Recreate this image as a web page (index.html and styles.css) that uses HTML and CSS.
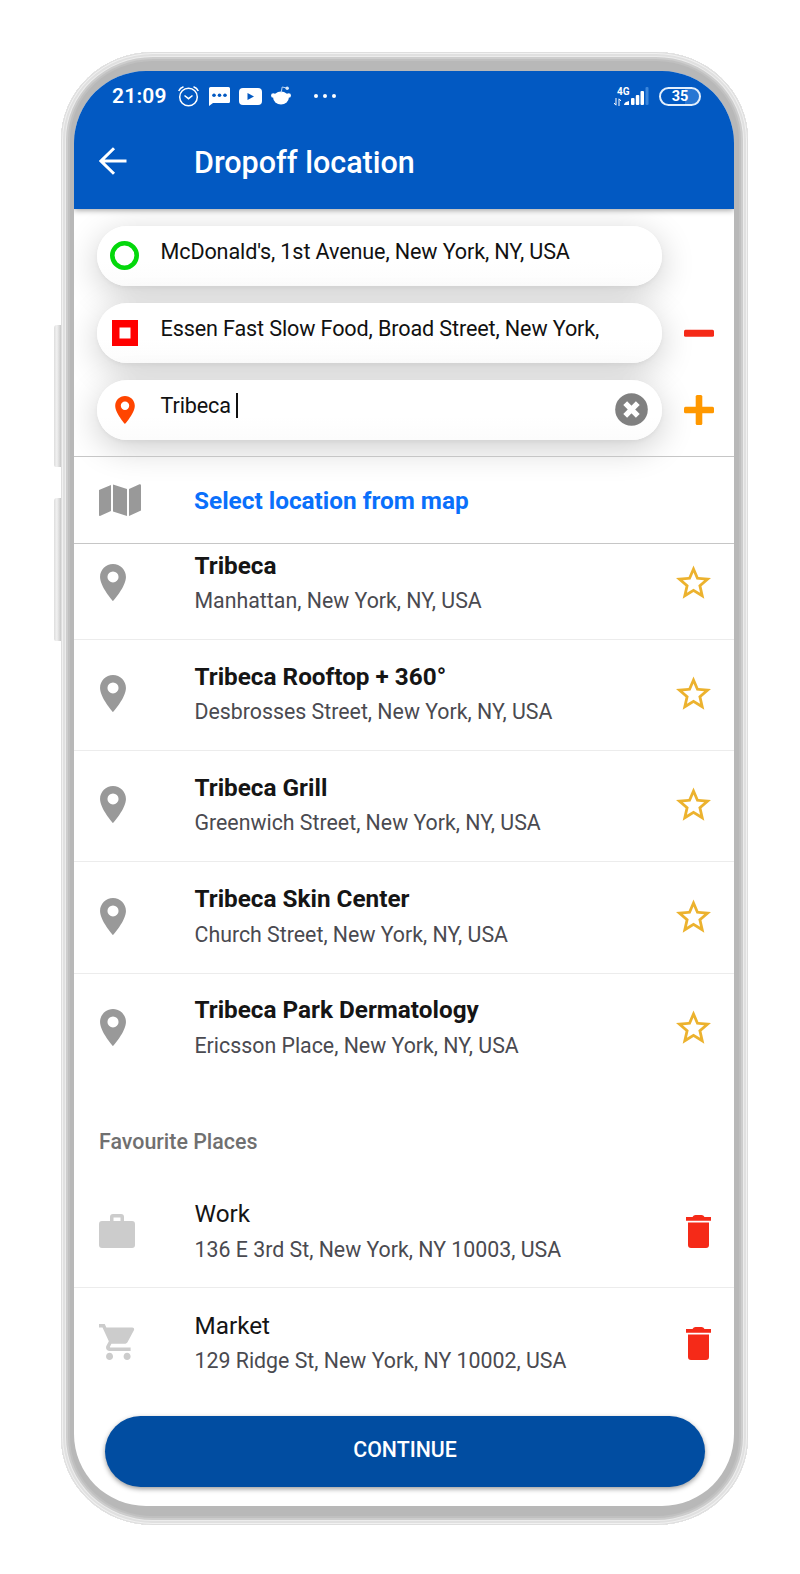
FILE: index.html
```html
<!DOCTYPE html>
<html lang="en">
<head>
<meta charset="utf-8">
<title>Dropoff location</title>
<link rel="stylesheet" href="styles.css">
</head>
<body>
<svg width="0" height="0" class="defs">
  <symbol id="pin" viewBox="5 2 14 20"><path d="M12 2C8.13 2 5 5.13 5 9c0 5.25 7 13 7 13s7-7.75 7-13c0-3.87-3.13-7-7-7zm0 10a3 3 0 1 1 0-6 3 3 0 0 1 0 6z"/></symbol>
  <symbol id="star" viewBox="2 2 20 19"><path d="M22 9.24l-7.19-.62L12 2 9.19 8.63 2 9.24l5.46 4.73L5.82 21 12 17.27 18.18 21l-1.63-7.03L22 9.24zM12 15.4l-3.76 2.27 1-4.28-3.32-2.88 4.38-.38L12 6.1l1.71 4.04 4.38.38-3.32 2.88 1 4.28L12 15.4z"/></symbol>
  <symbol id="trash" viewBox="0 0 25 33"><path d="M0 2h6.500q1-2 3-2h6q2 0 3 2H25v3.800H0zM2 7.500h21V30q0 3-3 3H5q-3 0-3-3z"/></symbol>
</svg>
<div class="stage">
  <div class="side-button upper"></div>
  <div class="side-button lower"></div>
  <div class="phone">
    <div class="screen">
      <header class="top">
        <div class="status">
          <span class="clock">21:09</span>
          <svg class="s-alarm" width="21" height="21" viewBox="0 0 21 21" fill="none" stroke="#fff" stroke-width="1.500"><circle cx="10.500" cy="11" r="8.800"/><path d="M6.500 9.500l4 3.200 4-3.200M.7 5Q2 2 5.500.8M20.300 5Q19 2 15.500.8"/></svg>
          <svg class="s-chat" width="21" height="19" viewBox="0 0 21 19"><path fill="#fff" d="M1.500 0h18Q21 0 21 1.500v13q0 1.500-1.500 1.500H4l-4 3V1.500Q0 0 1.500 0z"/><g fill="#0259c2"><circle cx="5" cy="8.200" r="1.800"/><circle cx="10.500" cy="8.200" r="1.800"/><circle cx="16" cy="8.200" r="1.800"/></g></svg>
          <svg class="s-tube" width="23" height="17" viewBox="0 0 23 17"><rect width="23" height="17" rx="4" fill="#fff"/><path fill="#0259c2" d="M8.500 5l6.500 3.500L8.500 12z"/></svg>
          <svg class="s-reddit" width="20" height="19" viewBox="0 0 20 19"><ellipse cx="10" cy="12" rx="7.800" ry="6.500" fill="#fff"/><circle cx="2.300" cy="9.500" r="2.300" fill="#fff"/><circle cx="17.700" cy="9.500" r="2.300" fill="#fff"/><path d="M10.200 6.500L11.200 1l4.500 1" fill="none" stroke="#b9d3f2" stroke-width="1"/><circle cx="16.200" cy="2.200" r="1.700" fill="#d9e8f8"/></svg>
          <svg class="s-dots" width="22" height="4" viewBox="0 0 22 4" fill="#fff"><circle cx="2" cy="2" r="2"/><circle cx="11" cy="2" r="2"/><circle cx="20" cy="2" r="2"/></svg>
          <span class="net"><span class="g4">4G</span>
            <svg width="7" height="8" viewBox="0 0 7 8" fill="none" stroke="#fff"><path d="M2 0v7M2 7.300L0 5M5 8V1M5 .7L7 3"/></svg></span>
          <svg class="s-signal" width="25" height="18" viewBox="0 0 25 18" fill="#fff"><path d="M0 18q0-3 5-4v4z"/><rect x="7" y="11" width="3.500" height="7" rx="1"/><rect x="11.800" y="8" width="3.500" height="10" rx="1"/><rect x="16.500" y="4" width="3.500" height="14" rx="1"/><rect x="21.500" y="0" width="3" height="18" rx="1" fill="#3a86dc"/></svg>
          <span class="battery">35</span>
        </div>
        <div class="bar">
          <svg class="back" width="28" height="28" viewBox="0 0 28 28" fill="none" stroke="#fff" stroke-width="3"><path d="M27.500 14H2M15 1.300L2 14l13 12.700"/></svg>
          <h1>Dropoff location</h1>
        </div>
      </header>
      <section class="stops">
        <div class="stop">
          <div class="field">
            <span class="mark"><svg width="29" height="29" viewBox="0 0 29 29"><circle cx="14.500" cy="14.500" r="12.200" fill="none" stroke="#04d80c" stroke-width="4.600"/></svg></span>
            <span class="value">McDonald's, 1st Avenue, New York, NY, USA</span>
          </div>
        </div>
        <div class="stop">
          <div class="field">
            <span class="mark"><svg width="26" height="26" viewBox="0 0 26 26"><path fill="#f00" fill-rule="evenodd" d="M0 0h26v26H0zM7.500 7.500v11h11v-11z"/></svg></span>
            <span class="value">Essen Fast Slow Food, Broad Street, New York,</span>
          </div>
          <svg class="action" width="30" height="30" viewBox="0 0 30 30"><rect y="11.700" width="30" height="7" rx="1.500" fill="#f52a18"/></svg>
        </div>
        <div class="stop">
          <div class="field">
            <span class="mark"><svg width="20" height="28" fill="#ff4500"><use href="#pin"/></svg></span>
            <span class="value">Tribeca<i class="caret"></i></span>
            <svg class="clear" width="33" height="33" viewBox="0 0 33 33"><circle cx="16.500" cy="16.500" r="16.300" fill="#808080"/><path d="M10.200 10.200l12.600 12.600M22.800 10.200L10.200 22.800" stroke="#fff" stroke-width="5.400"/></svg>
          </div>
          <svg class="action" width="30" height="30" viewBox="0 0 30 30" fill="#ff9800"><rect y="11.700" width="30" height="6.600" rx="1.500"/><rect x="11.700" width="6.600" height="30" rx="1.500"/></svg>
        </div>
      </section>
      <div class="map-link">
        <svg width="42" height="33" viewBox="0 0 42 33" fill="#999"><path d="M0 6L12 1v26L1.500 31.800Q0 32.500 0 31zM14 .5L28 5v27L14 27.500zM30 5L40.500.3Q42 0 42 1.500v25L30 32z"/></svg>
        <a>Select location from map</a>
      </div>
      <ul class="list results">
        <li><svg class="pin"><use href="#pin"/></svg><div><b>Tribeca</b><p>Manhattan, New York, NY, USA</p></div><svg class="star"><use href="#star"/></svg></li>
        <li><svg class="pin"><use href="#pin"/></svg><div><b>Tribeca Rooftop + 360°</b><p>Desbrosses Street, New York, NY, USA</p></div><svg class="star"><use href="#star"/></svg></li>
        <li><svg class="pin"><use href="#pin"/></svg><div><b>Tribeca Grill</b><p>Greenwich Street, New York, NY, USA</p></div><svg class="star"><use href="#star"/></svg></li>
        <li><svg class="pin"><use href="#pin"/></svg><div><b>Tribeca Skin Center</b><p>Church Street, New York, NY, USA</p></div><svg class="star"><use href="#star"/></svg></li>
        <li><svg class="pin"><use href="#pin"/></svg><div><b>Tribeca Park Dermatology</b><p>Ericsson Place, New York, NY, USA</p></div><svg class="star"><use href="#star"/></svg></li>
      </ul>
      <h2>Favourite Places</h2>
      <ul class="list favourites">
        <li><svg class="fav" viewBox="0 0 36 36"><path fill-rule="evenodd" d="M11 8V4q0-3 3-3h8q3 0 3 3v4h8q3 0 3 3v21q0 3-3 3H3q-3 0-3-3V11q0-3 3-3zM14.500 4.500V8h7V4.500z"/></svg><div><b>Work</b><p>136 E 3rd St, New York, NY 10003, USA</p></div><svg class="trash"><use href="#trash"/></svg></li>
        <li><svg class="fav" viewBox="1 2 20.500 20" preserveAspectRatio="none"><path d="M7 18c-1.100 0-1.990.9-1.990 2S5.900 22 7 22s2-.9 2-2-.9-2-2-2zM1 2v2h2l3.600 7.590-1.350 2.450c-.16.280-.25.610-.25.960 0 1.100.9 2 2 2h12v-2H7.420c-.14 0-.25-.11-.25-.25l.03-.12.900-1.630h7.450c.750 0 1.410-.41 1.750-1.030l3.580-6.490c.08-.14.120-.31.120-.48 0-.55-.45-1-1-1H5.210l-.94-2H1zm16 16c-1.100 0-1.990.9-1.990 2s.89 2 1.990 2 2-.9 2-2-.9-2-2-2z"/></svg><div><b>Market</b><p>129 Ridge St, New York, NY 10002, USA</p></div><svg class="trash"><use href="#trash"/></svg></li>
      </ul>
      <button class="continue">CONTINUE</button>
    </div>
  </div>
</div>
</body>
</html>
```
FILE: styles.css
```css
* { box-sizing: border-box; }
body { margin: 0; background: #fff; font-family: Roboto, "Liberation Sans", sans-serif; }
h1, h2, p, ul { margin: 0; padding: 0; }
svg { display: block; flex: none; }
.defs { position: absolute; }
.stage { position: relative; width: 800px; height: 1574px; padding: 52px 52px 49px 61px; }

/* device frame */
.phone {
  width: 687px; height: 1473px; padding: 19px 14px 19px 13px; border-radius: 92px / 88px;
  background: #b8b8b8;
  box-shadow: inset 0 0 0 1px #dedede, inset 0 0 0 2px #f1f1f1, inset 0 0 0 4px #e0e0e0,
    inset 0 0 0 5px #ececec, inset 0 0 0 7px #cdcdcd, inset 0 0 0 9px #c0c0c0;
}
.side-button {
  position: absolute; left: 54px; width: 7px; border-radius: 3px 0 0 2px;
  background: linear-gradient(90deg, #ddd, #f1f1f1 40%, #c9c9c9);
}
.side-button.upper { top: 325px; height: 142px; }
.side-button.lower { top: 498px; height: 143px; }
.screen {
  width: 660px; height: 1435px; border-radius: 72px; overflow: hidden; background: #fff;
  display: flex; flex-direction: column;
}

/* header */
.top { position: relative; z-index: 2; flex: none; height: 137.500px; background: #0259c2; color: #fff; box-shadow: 0 1px 6px rgba(0,0,0,.4); }
.status { display: flex; height: 50px; padding: 0 33px 0 38px; align-items: center; }
.clock { width: 66px; font-size: 21px; font-weight: 600; letter-spacing: .2px; }
.s-chat { margin: 1px 0 0 10px; }
.s-tube { margin-left: 9px; }
.s-reddit { margin: -2px 0 0 9px; }
.s-dots { margin-left: 23px; }
.net { margin-left: auto; width: 16px; height: 20px; }
.g4 { display: block; padding-left: 3px; font-size: 10px; line-height: 11px; font-weight: 700; margin-bottom: 1px; }
.s-signal { margin: -1px 10px 0 -6px; }
.battery { width: 42px; height: 19px; border: 2px solid #e3effc; border-radius: 10px; background: linear-gradient(90deg, transparent 62%, #2877d3 62%); font-size: 14.500px; font-weight: 700; line-height: 15px; text-align: center; }
.bar { display: flex; height: 87px; padding: 0 25px; align-items: center; }
.back { margin-top: -7px; }
h1 { margin: -5px 0 0 67px; font-size: 30.500px; font-weight: 500; }

/* stops */
.stops { flex: none; height: 247.500px; padding: 17px 22px 0 23px; display: flex; flex-direction: column; gap: 17px; }
.stop { display: flex; align-items: center; gap: 22px; height: 60px; }
.field { display: flex; flex: none; width: 565px; height: 60px; padding-right: 14px; align-items: center; border-radius: 30px; background: linear-gradient(#fff 60%, #fcfcfc); box-shadow: 0 8px 34px rgba(0,0,0,.2), 0 2px 4px rgba(0,0,0,.04); }
.mark { width: 55px; display: flex; justify-content: center; }
.value { flex: 1; display: flex; margin: -7px 0 0 8.500px; font-size: 21.600px; letter-spacing: -.13px; line-height: 26px; white-space: nowrap; color: #111; }
.caret { width: 2px; height: 25px; margin: 0 0 0 5px; background: #111; }
.map-link { flex: none; height: 88px; display: flex; align-items: center; gap: 53px; padding-left: 25px; border-top: 1px solid #c6c6c6; border-bottom: 1px solid #c6c6c6; font-size: 24.350px; font-weight: 700; color: #0a70fb; }
.map-link a { margin-top: 1px; }

/* lists */
.list { flex: none; list-style: none; }
li { display: flex; height: 111.200px; align-items: flex-end; padding: 0 23px 0 25px; border-bottom: 1.500px solid #ececec; }
li:last-child { border-bottom-color: transparent; }
.results li:first-child { height: 96px; }
li div { flex: 1; padding-bottom: 20px; white-space: nowrap; }
.results li div { padding-bottom: 21px; }
li b { display: block; font-size: 24.300px; line-height: 28px; font-weight: 700; color: #151515; }
li p { margin-top: 3.500px; font-size: 21.330px; line-height: 35px; color: #4a4a50; }
.favourites b { font-weight: 400; }
.pin { width: 28px; height: 37px; margin: 0 67.500px 38px 0; fill: #999; }
.star { width: 35px; height: 34px; margin: 0 0 40px -35px; fill: #ecb22e; }
.fav { width: 36px; height: 36px; margin: 0 59.500px 38px 0; fill: #ccc; }
.trash { width: 25px; height: 33px; margin: 0 0 38.500px -25px; fill: #f52a18; }
h2 { flex: none; height: 92px; padding: 43px 0 0 25px; font-size: 21.400px; line-height: 28px; font-weight: 500; color: #707070; }
.continue { flex: none; width: 600px; height: 71px; margin: 16.500px 0 0 31px; border: 0; border-radius: 36px; background: #014da1; box-shadow: 0 2px 5px rgba(0,0,0,.4); color: #fff; font: 500 21.300px/68px Roboto, "Liberation Sans", sans-serif; padding: 0 0 3px; }
```
